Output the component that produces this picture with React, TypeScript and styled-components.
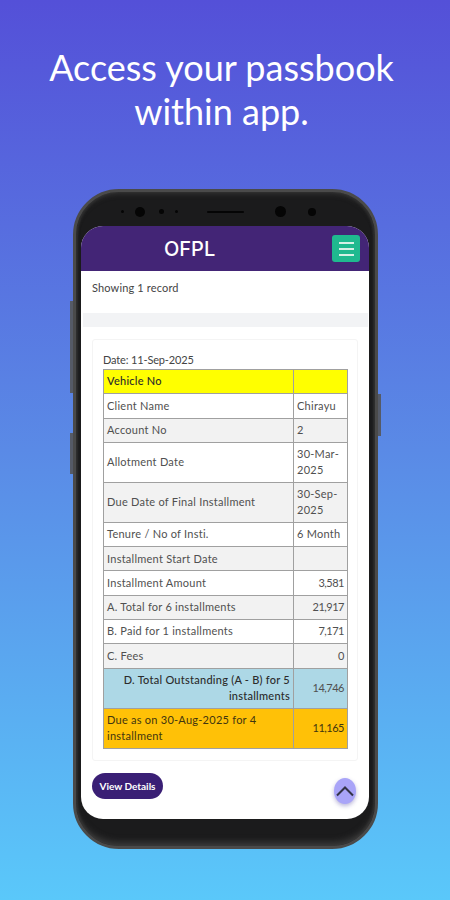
import React from 'react'
import styled, { createGlobalStyle } from 'styled-components'

const GlobalStyle = createGlobalStyle`
  html, body {
    margin: 0;
    padding: 0;
  }
  * {
    box-sizing: border-box;
  }
`

type Tone = 'plain' | 'shade' | 'yellow' | 'blue' | 'amber'

interface IRow {
  label: string
  value: string
  tone: Tone
  numeric?: boolean
  alignLabel?: 'left' | 'right'
  bold?: boolean
}

const rows: IRow[] = [
  { label: 'Vehicle No', value: '', tone: 'yellow', bold: true },
  { label: 'Client Name', value: 'Chirayu', tone: 'plain' },
  { label: 'Account No', value: '2', tone: 'shade' },
  { label: 'Allotment Date', value: '30-Mar-2025', tone: 'plain' },
  { label: 'Due Date of Final Installment', value: '30-Sep-2025', tone: 'shade' },
  { label: 'Tenure / No of Insti.', value: '6 Month', tone: 'plain' },
  { label: 'Installment Start Date', value: '', tone: 'shade' },
  { label: 'Installment Amount', value: '3,581', tone: 'plain', numeric: true },
  { label: 'A. Total for 6 installments', value: '21,917', tone: 'shade', numeric: true },
  { label: 'B. Paid for 1 installments', value: '7,171', tone: 'plain', numeric: true },
  { label: 'C. Fees', value: '0', tone: 'shade', numeric: true },
  {
    label: 'D. Total Outstanding (A - B) for 5 installments',
    value: '14,746',
    tone: 'blue',
    numeric: true,
    alignLabel: 'right',
    bold: true,
  },
  { label: 'Due as on 30-Aug-2025 for 4 installment', value: '11,165', tone: 'amber', numeric: true },
]

const toneColor: Record<Tone, string> = {
  plain: '#ffffff',
  shade: '#f2f2f2',
  yellow: '#ffff00',
  blue: '#add8e6',
  amber: '#ffc107',
}

function App() {
  return (
    <>
      <GlobalStyle />
      <Page>
        <Headline>
          Access your passbook
          <br />
          within app.
        </Headline>
        <Phone>
          <SideKey $side={'left'} $top={109} $height={92} />
          <SideKey $side={'left'} $top={241} $height={41} />
          <SideKey $side={'right'} $top={202} $height={42} />
          <Bezel>
            <Dot $size={3} />
            <Dot $size={10} $margin={'0 0 0 11px'} />
            <Dot $size={5} $margin={'0 0 0 14px'} />
            <Dot $size={3} $margin={'0 0 0 11px'} />
            <Speaker />
            <Dot $size={11} />
            <Dot $size={8} $margin={'0 0 0 22px'} />
          </Bezel>
          <Screen>
            <AppBar>
              <AppTitle>OFPL</AppTitle>
              <MenuButton aria-label={'menu'}>
                <MenuLine />
                <MenuLine />
                <MenuLine />
              </MenuButton>
            </AppBar>
            <RecordCount>Showing 1 record</RecordCount>
            <Divider />
            <Card>
              <DateText>Date: 11-Sep-2025</DateText>
              <Table>
                <colgroup>
                  <col style={{ width: 190 }} />
                  <col />
                </colgroup>
                <tbody>
                  {rows.map(({ label, value, tone, numeric, alignLabel, bold }) => (
                    <tr key={label}>
                      <Cell $tone={tone} $align={alignLabel} $bold={bold}>
                        {label}
                      </Cell>
                      <Cell $tone={tone} $align={numeric ? 'right' : 'left'} $numeric={numeric}>
                        {value}
                      </Cell>
                    </tr>
                  ))}
                </tbody>
              </Table>
            </Card>
            <Footer>
              <DetailsButton>View Details</DetailsButton>
            </Footer>
            <ScrollTop aria-label={'scroll to top'}>
              <svg width={20} height={12} viewBox={'0 0 20 12'} fill={'none'}>
                <path d={'M2 10.5 L10 2.5 L18 10.5'} stroke={'#333347'} strokeWidth={2} />
              </svg>
            </ScrollTop>
          </Screen>
        </Phone>
      </Page>
    </>
  )
}

export default App

const Page = styled.div`
  width: 450px;
  height: 900px;
  overflow: hidden;
  display: flex;
  flex-direction: column;
  align-items: center;
  background: linear-gradient(180deg, #5450d8 0%, #5a8ae6 50%, #5ac8fa 100%);
  font-family: 'Lato', 'Liberation Sans', sans-serif;
`

const Headline = styled.h1`
  margin: 45px 7px 0 0;
  height: 144px;
  font-size: 36px;
  line-height: 44px;
  font-weight: 400;
  color: #ffffff;
  text-align: center;
`

const Phone = styled.div`
  position: relative;
  width: 305px;
  height: 660px;
  margin-left: 1px;
  padding: 0 6px 27px 5px;
  display: flex;
  flex-direction: column;
  border-radius: 46px;
  background: #1b1b1c;
  border: 3px solid #4a4a4a;
  box-shadow: inset 0 -7px 6px -3px #3a3a3a, inset 0 5px 5px -3px #333333, inset 2px 0 2px #2e2e2e,
    inset -2px 0 2px #2e2e2e;
`

const SideKey = styled.div<{ $side: 'left' | 'right'; $top: number; $height: number }>`
  position: absolute;
  top: ${({ $top }) => $top}px;
  ${({ $side }) => ($side === 'left' ? 'left: -6px;' : 'right: -6px;')}
  width: 3px;
  height: ${({ $height }) => $height}px;
  background: #555a66;
`

const Bezel = styled.div`
  height: 34px;
  flex: none;
  display: flex;
  align-items: center;
  padding: 5px 0 0 40px;
`

const Dot = styled.span<{ $size: number; $margin?: string }>`
  width: ${({ $size }) => $size}px;
  height: ${({ $size }) => $size}px;
  margin: ${({ $margin }) => $margin || '0'};
  border-radius: 50%;
  background: #050505;
  flex: none;
`

const Speaker = styled.span`
  width: 37px;
  height: 2px;
  margin: 0 31px 0 29px;
  background: #050505;
  border-radius: 1px;
  flex: none;
`

const Screen = styled.div`
  position: relative;
  flex: 1;
  display: flex;
  flex-direction: column;
  overflow: hidden;
  background: #ffffff;
  border-radius: 22px;
`

const AppBar = styled.div`
  height: 45px;
  flex: none;
  display: flex;
  align-items: center;
  justify-content: space-between;
  padding: 0 9px 0 83px;
  background: #432576;
`

const AppTitle = styled.div`
  font-size: 20px;
  font-weight: 500;
  color: #ffffff;
  font-family: 'Inter', 'Liberation Sans', sans-serif;
`

const MenuButton = styled.button`
  width: 28px;
  height: 27px;
  padding: 0;
  display: flex;
  flex-direction: column;
  align-items: center;
  justify-content: center;
  gap: 4px;
  border: none;
  border-radius: 3px;
  background: #1fb98f;
`

const MenuLine = styled.span`
  width: 15px;
  height: 2px;
  background: #d5f0e6;
`

const RecordCount = styled.div`
  height: 42px;
  flex: none;
  padding: 10px 0 0 11px;
  font-size: 11px;
  line-height: 14px;
  letter-spacing: 0.15px;
  color: #444444;
`

const Divider = styled.div`
  height: 14px;
  flex: none;
  margin: 0 1px 0 2px;
  background: #f2f3f5;
`

const Card = styled.div`
  flex: none;
  height: 422px;
  margin: 12px 11px 0 11px;
  padding: 13px 0 0 10px;
  border: 1px solid #f4f4f4;
  border-radius: 3px;
`

const DateText = styled.div`
  height: 16px;
  font-size: 11px;
  line-height: 14px;
  letter-spacing: -0.15px;
  color: #444444;
`

const Table = styled.table`
  width: 245px;
  table-layout: fixed;
  border-collapse: collapse;
`

const Cell = styled.td<{ $tone: Tone; $align?: 'left' | 'right'; $bold?: boolean; $numeric?: boolean }>`
  height: 24.3px;
  padding: 3px;
  border: 1px solid #a0a0a0;
  background: ${({ $tone }) => toneColor[$tone]};
  text-align: ${({ $align }) => $align || 'left'};
  font-size: 11px;
  line-height: 16.5px;
  font-weight: ${({ $bold }) => ($bold ? 500 : 400)};
  color: ${({ $bold, $tone }) => ($bold ? '#2b2b2b' : $tone === 'amber' ? '#3f3510' : '#505050')};
  letter-spacing: ${({ $numeric }) => ($numeric ? '-0.5px' : '0.25px')};
`

const Footer = styled.div`
  flex: 1;
  padding: 12px 0 0 11px;
`

const DetailsButton = styled.button`
  height: 26px;
  width: 71px;
  padding: 0;
  border: none;
  border-radius: 13px;
  background: #3a1f75;
  color: #ffffff;
  font-family: 'Lato', 'Liberation Sans', sans-serif;
  font-size: 10px;
  font-weight: 700;
`

const ScrollTop = styled.button`
  position: absolute;
  right: 13px;
  bottom: 15px;
  width: 22px;
  height: 26px;
  padding: 0;
  display: flex;
  align-items: center;
  justify-content: center;
  border: none;
  border-radius: 50%;
  background: #a9a4f8;
  box-shadow: 0 2px 4px rgba(80, 70, 160, 0.4);
`
